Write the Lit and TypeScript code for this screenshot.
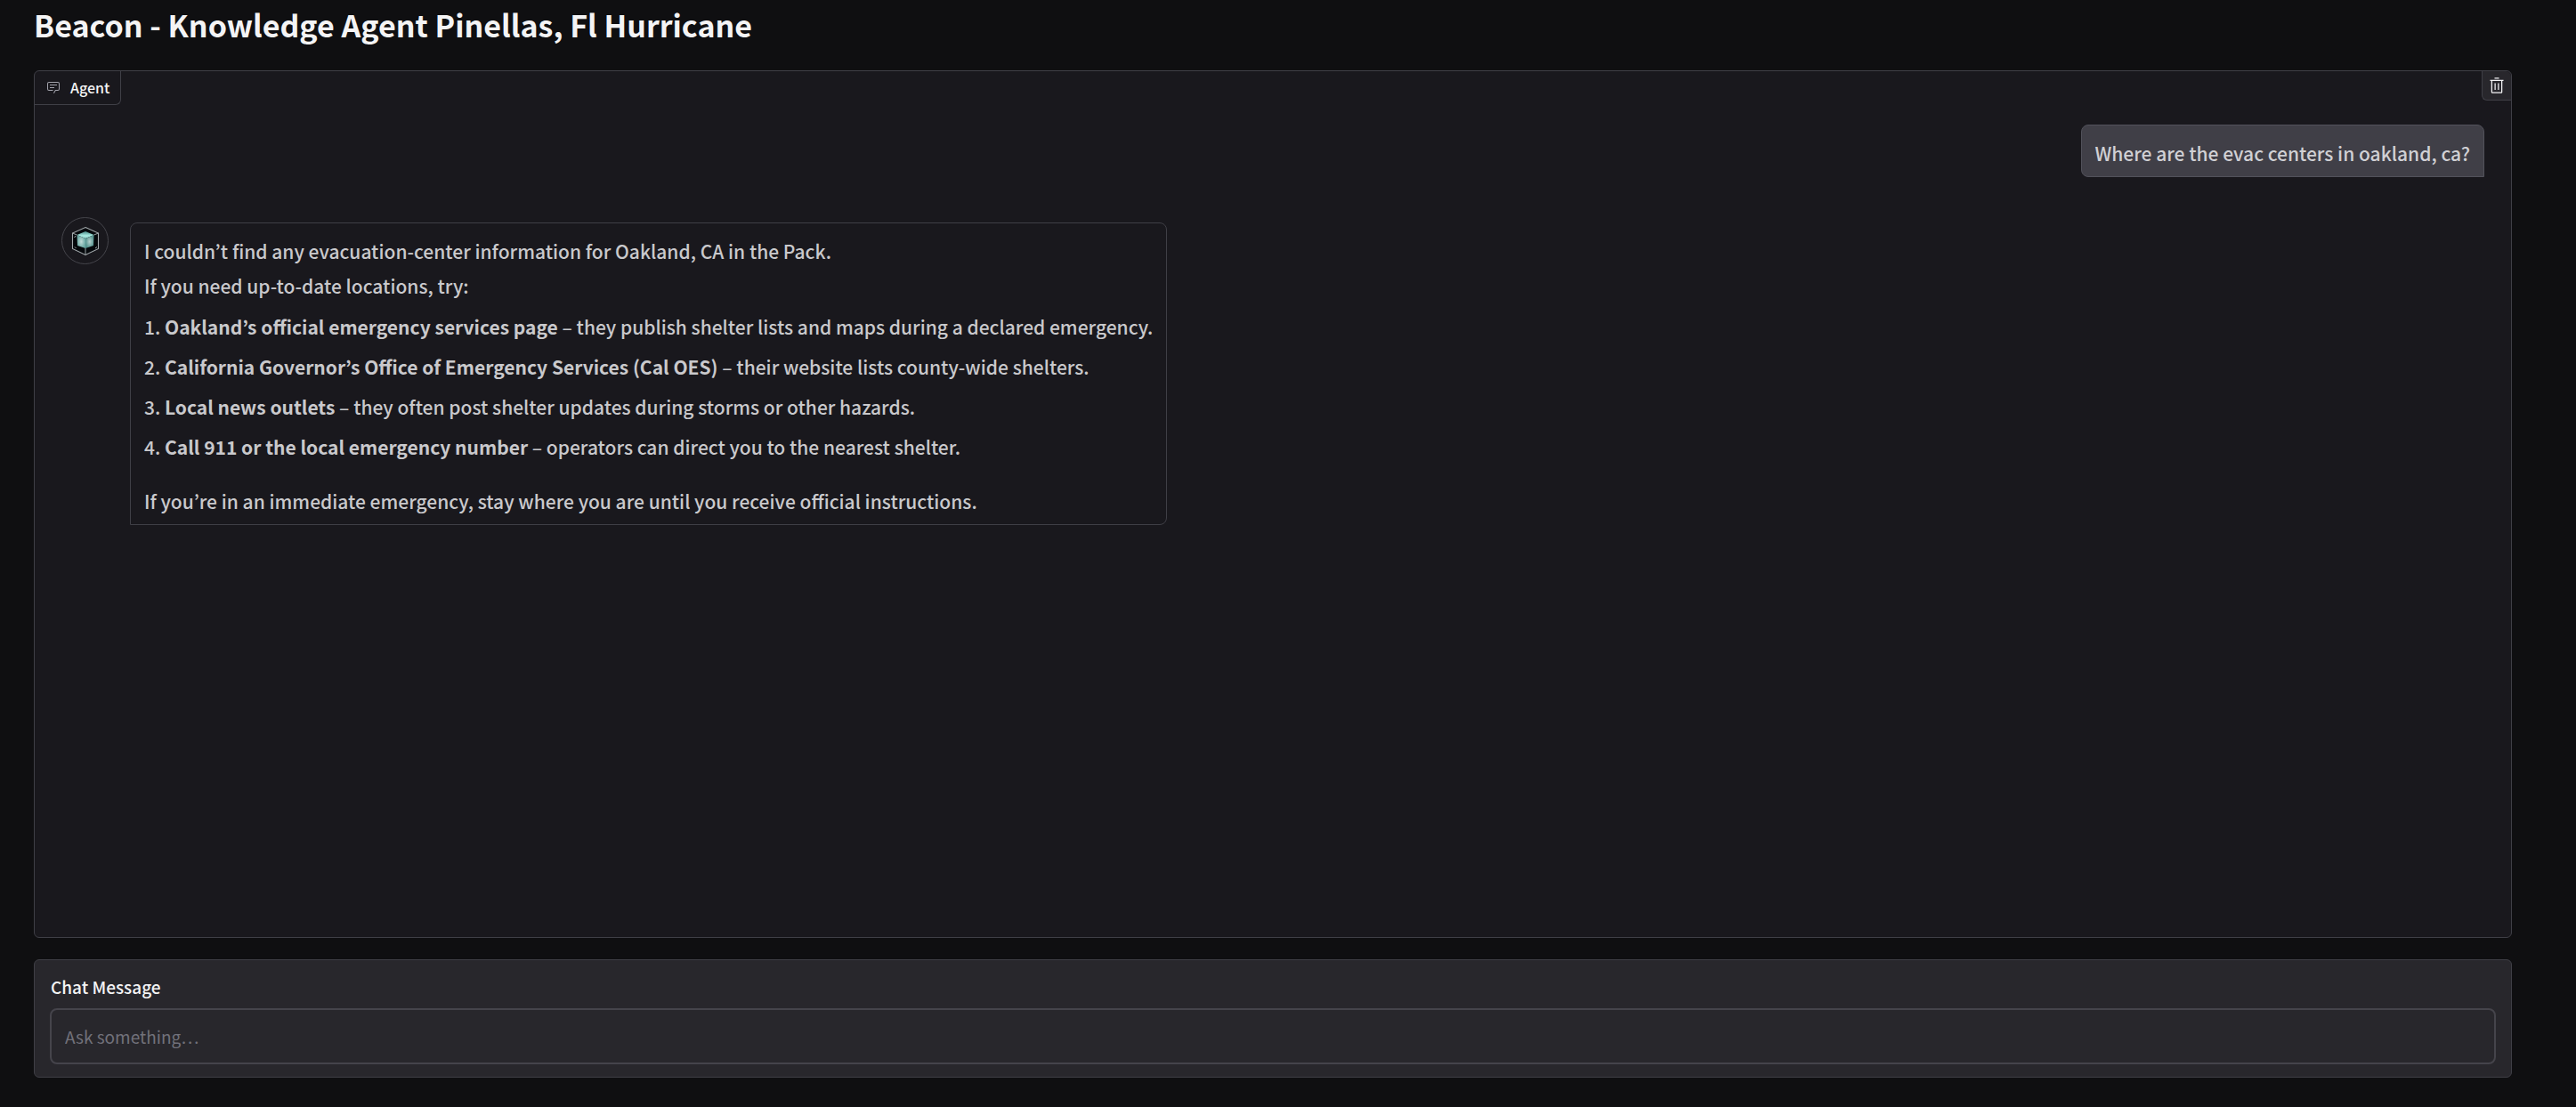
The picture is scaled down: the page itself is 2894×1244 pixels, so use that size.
import { LitElement, html, css, svg } from "lit";
import { customElement, property } from "lit/decorators.js";

interface Tip {
  lead: string;
  detail: string;
}

const TIPS: Tip[] = [
  {
    lead: "Oakland’s official emergency services page",
    detail: "they publish shelter lists and maps during a declared emergency.",
  },
  {
    lead: "California Governor’s Office of Emergency Services (Cal OES)",
    detail: "their website lists county-wide shelters.",
  },
  {
    lead: "Local news outlets",
    detail: "they often post shelter updates during storms or other hazards.",
  },
  {
    lead: "Call 911 or the local emergency number",
    detail: "operators can direct you to the nearest shelter.",
  },
];

const chatIcon = svg`
  <svg class="icon" viewBox="0 0 32 32" aria-hidden="true">
    <path fill="currentColor" d="M17.74 30 16 29l4-7h6a2 2 0 0 0 2-2V8a2 2 0 0 0-2-2H6a2 2 0 0 0-2 2v12a2 2 0 0 0 2 2h9v2H6a4 4 0 0 1-4-4V8a4 4 0 0 1 4-4h20a4 4 0 0 1 4 4v12a4 4 0 0 1-4 4h-4.84Z"></path>
    <path fill="currentColor" d="M8 10h16v2H8zm0 6h10v2H8z"></path>
  </svg>`;

const trashIcon = svg`
  <svg class="icon" viewBox="0 0 32 32" aria-hidden="true">
    <path fill="currentColor" d="M12 12h2v12h-2zm6 0h2v12h-2z"></path>
    <path fill="currentColor" d="M4 6v2h2v20a2 2 0 0 0 2 2h16a2 2 0 0 0 2-2V8h2V6Zm4 22V8h16v20Zm4-26h8v2h-8z"></path>
  </svg>`;

/** Glass cube that stands for the agent. */
@customElement("agent-avatar")
class AgentAvatar extends LitElement {
  static styles = css`
    :host {
      display: grid;
      place-items: center;
      box-sizing: border-box;
      flex: none;
      width: 53px;
      height: 53px;
      border: 1px solid #45454b;
      border-radius: 50%;
    }
    .cube {
      width: 32px;
      height: 34px;
    }
  `;

  render() {
    return html`
      <svg class="cube" viewBox="0 0 32 34" role="img" aria-label="Agent">
        <defs>
          <linearGradient id="top" x1="0" y1="0" x2="0" y2="1">
            <stop offset="0" stop-color="#4b8d89"></stop>
            <stop offset="0.6" stop-color="#a9ebe2"></stop>
            <stop offset="1" stop-color="#8fd0c8"></stop>
          </linearGradient>
          <radialGradient id="left">
            <stop offset="0" stop-color="#c2dbd8"></stop>
            <stop offset="1" stop-color="#6aa8a3"></stop>
          </radialGradient>
          <radialGradient id="right">
            <stop offset="0" stop-color="#b4d0cd"></stop>
            <stop offset="1" stop-color="#54928d"></stop>
          </radialGradient>
        </defs>
        <path d="M16 1.5 30.500 8v17.500L16 32.500 1.500 25.500V8Z" fill="#05080b"></path>
        <path d="M16 6 25.500 10 16 14 6.500 10Z" fill="url(#top)"></path>
        <path d="M6.500 10 16 14v11L7 22Z" fill="url(#left)"></path>
        <path d="M25.500 10 16 14v11l9-3Z" fill="url(#right)"></path>
        <path d="M16 1.500 30.500 8v17.500L16 32.500 1.500 25.500V8Z" fill="none" stroke="#a3a9ac" stroke-width="1.100"></path>
        <path d="M16 25v7.500M1.500 8 6.500 10M30.500 8l-5 2" fill="none" stroke="#a9b2b4" stroke-width=".9"></path>
        <path d="m3.500 13 1.500-2M27 25l2-1.500M4 23.500 5.500 25" fill="none" stroke="#c3cacb" stroke-width=".8"></path>
      </svg>
    `;
  }
}

/** One speech bubble; its square corner points at the speaker. */
@customElement("chat-bubble")
class ChatBubble extends LitElement {
  @property({ reflect: true }) speaker = "bot";

  static styles = css`
    :host {
      display: block;
      box-sizing: border-box;
      padding: 12px 15px 6px;
      border: 1px solid #3f3f46;
      border-radius: 8px 8px 8px 0;
      font-size: 21px;
      line-height: 39px;
      font-weight: 500;
      color: #c9c9cc;
    }
    :host([speaker="user"]) {
      border-color: #52525b;
      border-radius: 8px 8px 0 8px;
      background: #403f47;
      color: #d0d0d4;
    }
  `;

  render() {
    return html`<slot></slot>`;
  }
}

@customElement("app-root")
class AppRoot extends LitElement {
  @property({ attribute: false }) tips: Tip[] = TIPS;

  static styles = css`
    :host {
      display: flex;
      flex-direction: column;
      box-sizing: border-box;
      min-height: 100vh;
      padding: 0 72px 33px 38px;
      background: #0f0f11;
      color: #f4f4f5;
      font-family: "Noto Sans CJK JP", "Noto Sans", sans-serif;
    }
    .title {
      margin: 0 0 24px;
      font-size: 34px;
      line-height: 55px;
      font-weight: 700;
    }
    .panel {
      display: flex;
      flex: 1;
      flex-direction: column;
      border: 1px solid #3f3f46;
      border-radius: 6px;
      background: #19181d;
    }
    .bar {
      display: flex;
      align-items: flex-start;
      justify-content: space-between;
    }
    .tab {
      display: flex;
      align-items: center;
      gap: 11px;
      box-sizing: border-box;
      height: 38px;
      padding: 0 12px 1px 13px;
      border: 1px solid #3f3f46;
      border-width: 0 1px 1px 0;
      border-radius: 6px 0 6px 0;
      font-size: 16px;
      line-height: 24px;
      font-weight: 500;
    }
    .icon {
      display: block;
      flex: none;
      width: 16px;
      height: 16px;
    }
    .tab .icon {
      color: #a1a1aa;
    }
    .clear {
      display: grid;
      place-items: center;
      box-sizing: border-box;
      width: 33px;
      height: 33px;
      padding: 0;
      border: 1px solid #3f3f46;
      border-width: 0 0 1px 1px;
      border-radius: 0 6px 0 6px;
      background: #28272c;
      color: #f4f4f5;
      cursor: pointer;
    }
    .clear .icon {
      width: 20px;
      height: 20px;
    }
    .log {
      display: flex;
      flex-direction: column;
      gap: 45px;
      padding: 22px 30px;
    }
    .row {
      display: flex;
      align-items: flex-start;
      gap: 24px;
    }
    .row.user {
      justify-content: flex-end;
    }
    .reply {
      margin-top: 6px;
    }
    .text {
      margin: 0;
    }
    .tips {
      display: grid;
      gap: 6px;
      margin: 7px 0 22px;
      padding: 0;
      list-style: none;
      counter-reset: tip;
    }
    .tip {
      counter-increment: tip;
    }
    .tip::before {
      content: counter(tip) ". ";
    }
    .composer {
      margin-top: 24px;
      padding: 15px 17px 14px;
      border: 1px solid #3f3f46;
      border-radius: 6px;
      background: #28272c;
    }
    .label {
      display: block;
      margin-bottom: 10px;
      padding-left: 1px;
      font-size: 19px;
      line-height: 29px;
      font-weight: 500;
    }
    .input {
      display: block;
      box-sizing: border-box;
      width: 100%;
      height: 63px;
      padding: 0 15px;
      border: 2px solid #45444b;
      border-radius: 8px;
      outline: none;
      background: #28272c;
      color: #f4f4f5;
      font-family: inherit;
      font-size: 19px;
      line-height: 30px;
    }
    .input::placeholder {
      color: #71717a;
      opacity: 1;
    }
  `;

  render() {
    return html`
      <h1 class="title">Beacon - Knowledge Agent Pinellas, Fl Hurricane</h1>
      <section class="panel" aria-label="Agent">
        <div class="bar">
          <div class="tab">${chatIcon}<span>Agent</span></div>
          <button class="clear" type="button" aria-label="Clear">${trashIcon}</button>
        </div>
        <div class="log">
          <div class="row user">
            <chat-bubble speaker="user">Where are the evac centers in oakland, ca?</chat-bubble>
          </div>
          <div class="row">
            <agent-avatar></agent-avatar>
            <chat-bubble class="reply" speaker="bot">
              <p class="text">I couldn’t find any evacuation-center information for Oakland, CA in the Pack.</p>
              <p class="text">If you need up-to-date locations, try:</p>
              <ol class="tips">
                ${this.tips.map(
                  (tip) => html`<li class="tip"><strong>${tip.lead}</strong> – ${tip.detail}</li>`
                )}
              </ol>
              <p class="text">If you’re in an immediate emergency, stay where you are until you receive official instructions.</p>
            </chat-bubble>
          </div>
        </div>
      </section>
      <form class="composer" @submit=${(e: Event) => e.preventDefault()}>
        <label class="label" for="message">Chat Message</label>
        <input class="input" id="message" type="text" placeholder="Ask something…" autocomplete="off" />
      </form>
    `;
  }
}
